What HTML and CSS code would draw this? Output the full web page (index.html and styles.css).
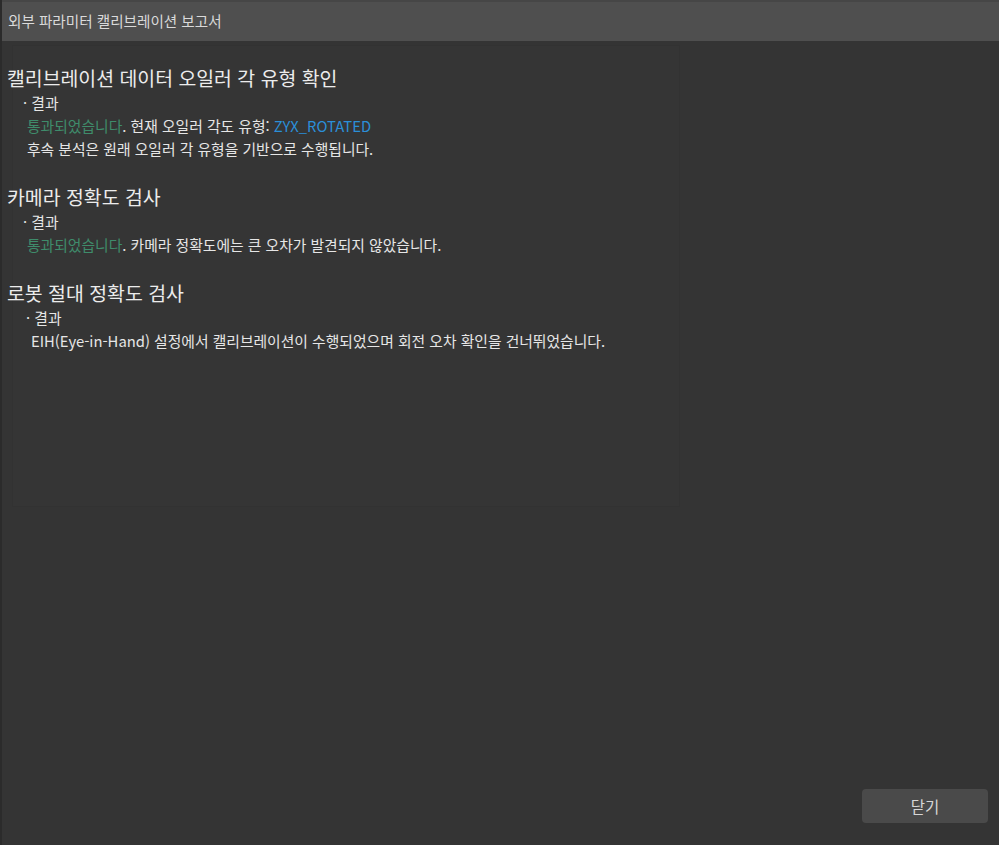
FILE: index.html
```html
<!DOCTYPE html>
<html lang="ko">
<head>
    <meta charset="UTF-8">
    <meta name="viewport" content="width=device-width, initial-scale=1.0">
    <title>외부 파라미터 캘리브레이션 보고서</title>
    <link rel="stylesheet" href="styles.css">
</head>
<body>
    <div class="dialog">
        <div class="titlebar">외부 파라미터 캘리브레이션 보고서</div>

        <div class="content">
            <div class="report">
                <section class="section">
                    <h2 class="section-title">캘리브레이션 데이터 오일러 각 유형 확인</h2>
                    <div class="bullet">· 결과</div>
                    <p class="line"><span class="pass">통과되었습니다</span>. 현재 오일러 각도 유형: <span class="value">ZYX_ROTATED</span></p>
                    <p class="line">후속 분석은 원래 오일러 각 유형을 기반으로 수행됩니다.</p>
                </section>

                <section class="section">
                    <h2 class="section-title">카메라 정확도 검사</h2>
                    <div class="bullet">· 결과</div>
                    <p class="line"><span class="pass">통과되었습니다</span>. 카메라 정확도에는 큰 오차가 발견되지 않았습니다.</p>
                </section>

                <section class="section section-wide">
                    <h2 class="section-title">로봇 절대 정확도 검사</h2>
                    <div class="bullet">· 결과</div>
                    <p class="line">EIH(Eye-in-Hand) 설정에서 캘리브레이션이 수행되었으며 회전 오차 확인을 건너뛰었습니다.</p>
                </section>
            </div>
        </div>

        <div class="footer">
            <button class="btn-close">닫기</button>
        </div>
    </div>
</body>
</html>
```

FILE: styles.css
```css
* {
    margin: 0;
    padding: 0;
    box-sizing: border-box;
}

body {
    background: #343434;
    font-family: "Noto Sans CJK KR", "Noto Sans", sans-serif;
    color: #e6e6e6;
    overflow: hidden;
}

.dialog {
    height: 845px;
    display: flex;
    flex-direction: column;
    border-left: 2px solid #2b2b2b;
}

.titlebar {
    height: 41px;
    background: #4f4f4f;
    color: #dadada;
    font-size: 14.6px;
    line-height: 38px;
    padding-left: 6px;
    border-top: 2px solid #464646;
}

.content {
    flex: 1;
    padding: 24px 0 0 5px;
}

.report {
    position: relative;
}

/* faint text panel behind the report */
.report::before {
    content: '';
    position: absolute;
    left: 5px;
    top: -20px;
    width: 666px;
    height: 460px;
    background: #353535;
    border: 1px solid #323232;
}

.section {
    position: relative;
    margin-bottom: 24px;
}

.section-title {
    font-size: 19.4px;
    font-weight: 400;
    line-height: 26px;
    color: #ececec;
}

.bullet {
    font-size: 14.8px;
    line-height: 23px;
    padding-left: 16px;
}

.line {
    font-size: 14.8px;
    line-height: 23px;
    padding-left: 20px;
}

.section-wide .bullet {
    padding-left: 19px;
}

.section-wide .line {
    padding-left: 24px;
}

.pass {
    color: #3f8c6b;
}

.value {
    color: #2b8fd8;
}

.footer {
    display: flex;
    justify-content: flex-end;
    padding: 0 11px 22px 0;
}

.btn-close {
    width: 126px;
    height: 34px;
    border: none;
    border-radius: 4px;
    background: #4a4a4a;
    color: #d6d6d6;
    font-family: "Noto Sans CJK KR", sans-serif;
    font-size: 15.5px;
}
```
